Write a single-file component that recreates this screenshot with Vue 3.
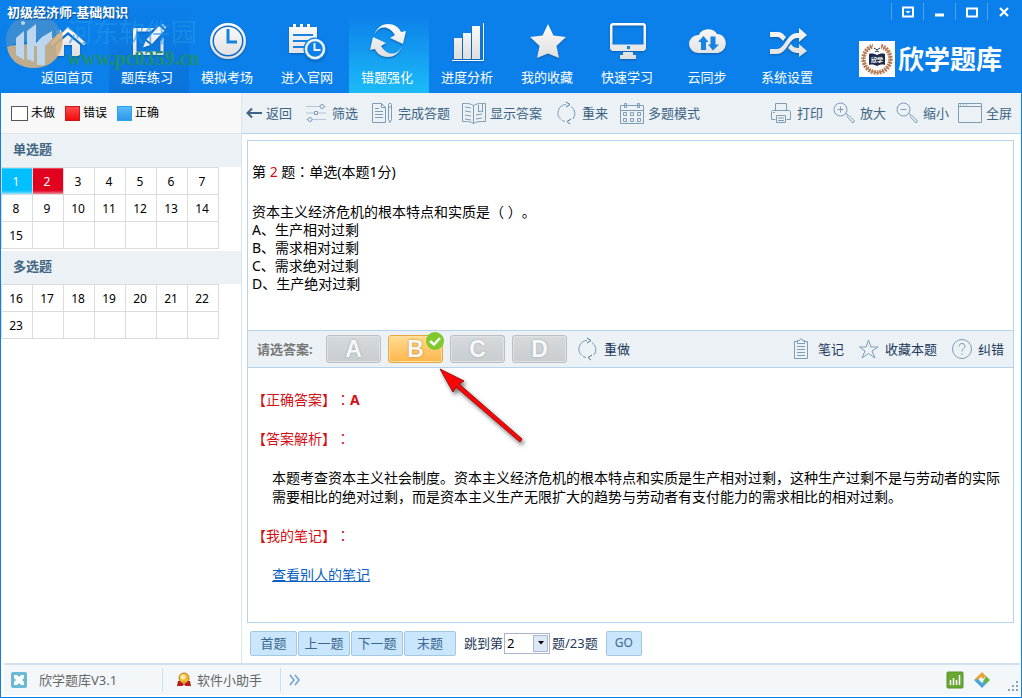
<script setup>
import { ref } from 'vue'

const nav = [
  { id: 'home', label: '返回首页' },
  { id: 'edit', label: '题库练习' },
  { id: 'clock', label: '模拟考场' },
  { id: 'site', label: '进入官网' },
  { id: 'sync', label: '错题强化' },
  { id: 'bars', label: '进度分析' },
  { id: 'star', label: '我的收藏' },
  { id: 'screen', label: '快速学习' },
  { id: 'cloud', label: '云同步' },
  { id: 'shuffle', label: '系统设置' },
]
const active = ref('sync')

const groups = [
  { title: '单选题', rows: [[1, 2, 3, 4, 5, 6, 7], [8, 9, 10, 11, 12, 13, 14], [15, '', '', '', '', '', '']] },
  { title: '多选题', rows: [[16, 17, 18, 19, 20, 21, 22], [23, '', '', '', '', '', '']] },
]
const state = { 1: 'right', 2: 'wrong' }

const toolsLeft = [
  { id: 'filter', label: '筛选' },
  { id: 'doc', label: '完成答题' },
  { id: 'book', label: '显示答案' },
  { id: 'redo', label: '重来' },
  { id: 'calendar', label: '多题模式' },
]
const toolsRight = [
  { id: 'print', label: '打印' },
  { id: 'plus', label: '放大' },
  { id: 'minus', label: '缩小' },
  { id: 'full', label: '全屏' },
]

const options = ['生产相对过剩', '需求相对过剩', '需求绝对过剩', '生产绝对过剩']
const letters = ['A', 'B', 'C', 'D']
const chosen = ref('B')
const current = ref(2)
</script>

<template>
  <div class="window">
    <header class="header">
      <nav class="nav">
        <button
          v-for="n in nav"
          :key="n.id"
          type="button"
          class="tile"
          :class="{ active: active === n.id, hover: n.id === 'edit' }"
          @click="active = n.id"
        >
          <svg class="tile-icon" viewBox="0 0 40 40" aria-hidden="true">
            <defs>
              <linearGradient :id="'g-' + n.id" gradientUnits="userSpaceOnUse" x1="0" y1="0" x2="0" y2="40">
                <stop offset="0" stop-color="#ffffff" />
                <stop offset="1" stop-color="#dcdcdc" />
              </linearGradient>
            </defs>
            <g :fill="`url(#g-${n.id})`">
              <path v-if="n.id === 'home'" d="M20 6 38 22l-2 2.500L20 11 4 24.500 2 22 8 16.500V9h5v4zM20 14l12 10v11h-8V24h-8v11H8V24z" />
              <template v-else-if="n.id === 'edit'">
                <path d="M5 7h21l-3.500 3.500H8.500v20h24V20l3-3.500V34H5z" />
                <path d="m31 5 5.500 4.500L24 23l-5.500-4.500zM17.500 20l5 4-7.500 2.500zM33 3.500c2-1.500 6 2 4.500 4.500z" />
              </template>
              <template v-else-if="n.id === 'clock'">
                <path fill-rule="evenodd" d="M20 2a18 18 0 1 0 0 36 18 18 0 0 0 0-36zm0 2.500a15.500 15.500 0 1 1 0 31 15.500 15.500 0 0 1 0-31z" />
                <circle cx="20" cy="20" r="14" />
                <path d="M20 8v13h9" fill="none" stroke="#1683e3" stroke-width="3" />
              </template>
              <template v-else-if="n.id === 'site'">
                <path d="M1 6h5v3h2V6h5v3h2V6h5v3h2V6h7v11H1zM1 16h28v16H1z" />
                <path d="M5 3h3v6H5zM12 3h3v6h-3zM19 3h3v6h-3z" />
                <path d="M5 14h20M5 20h15M5 26h12" stroke="#1683e3" stroke-width="2.200" />
                <circle cx="27" cy="28" r="11.500" fill="#0d80e9" />
                <circle cx="27" cy="28" r="9" fill="#0d80e9" stroke="#f2f2f2" stroke-width="2.500" />
                <path d="M26.500 22v7h6" fill="none" stroke="#f2f2f2" stroke-width="2" />
              </template>
              <template v-else-if="n.id === 'sync'">
                <path d="M6 14C9 6 15 3 20 3c6 0 11 3 13 8l5-1-3 13-13-6 5-3c-4-6-8-8-12-7.500C11 7 8 10 6 14z" />
                <path d="M34 25c-3 8-9 11-14 11-6 0-11-3-13-8l-5 1 3-13 13 6-5 3c4 6 8 8 12 7.500 4-.500 7-3.500 9-7.500z" />
              </template>
              <template v-else-if="n.id === 'bars'">
                <path d="M6 17h8v21H6zM15 12h8v26h-8zM24 5h8v33h-8z" />
                <path d="M4 39.500h31.500V2" fill="none" stroke="#fff" stroke-width="1" />
              </template>
              <path v-else-if="n.id === 'star'" d="m20 3 5.500 11.500L38 16l-9.500 9L31 37l-11-4.500L9 37l2.500-12L2 16l12.500-1.500z" />
              <template v-else-if="n.id === 'screen'">
                <path fill-rule="evenodd" d="M4 2h32l2 2v24l-2 2H4l-2-2V4zm.500 2.500v19h31v-19zM15 31h10v3h3v4H12v-4h3z" />
                <rect x="19" y="25" width="3" height="3" fill="#1683e3" />
              </template>
              <template v-else-if="n.id === 'cloud'">
                <path d="M10 32a9 9 0 0 1 0-18h1c2-7 15-8 18-1 11 0 12 17 1 19z" />
                <path d="m15.500 15 5 6H18v8h-5v-8h-3zM22.500 15.500h5v8H31l-6 6-5-6h2.500z" fill="#1683e3" />
              </template>
              <template v-else>
                <path d="M2 11h8c4 0 6 3 8 5l-3 4c-2-2-3-4-6-4H2zM2 28h7c8 0 10-16 20-16h2V7l8 7-8 7v-4h-2C21 17 19 33 9 33H2zM23 23c2 3 4 4 8 4v-4l8 7-8 6v-4c-6 0-8-2-11-5z" />
              </template>
            </g>
          </svg>
          <span>{{ n.label }}</span>
        </button>
      </nav>

      <div class="header-right">
        <div class="controls">
          <button type="button" aria-label="菜单">
            <svg viewBox="0 0 12 12"><path d="M1 1.500h10v9H1z" /><path d="M3.500 5h5L6 7.500z" class="solid" /></svg>
          </button>
          <button type="button" aria-label="最小化">
            <svg viewBox="0 0 12 12"><path d="M1 9h9" class="thick" /></svg>
          </button>
          <button type="button" aria-label="最大化">
            <svg viewBox="0 0 12 12"><path d="M1 2.500h10v8H1z" /></svg>
          </button>
          <button type="button" aria-label="关闭">
            <svg viewBox="0 0 12 12"><path d="m2 2 8 8M10 2l-8 8" /></svg>
          </button>
        </div>
        <div class="brand">
          <svg class="seal" viewBox="0 0 36 36" aria-hidden="true">
            <path fill="#fff" d="M0 0h36v36H0z" />
            <circle cx="18" cy="18" r="13.500" fill="none" stroke="#b87852" stroke-width="4.500" stroke-dasharray="1.800 1" />
            <circle cx="18" cy="18" r="13.500" fill="none" stroke="#b87852" stroke-width="1" />
            <path d="M14 0h8v7h-8z" fill="#fff" />
            <path d="m15 7 3 2 3-2M16 11l2-1 2 1" fill="none" stroke="#26334f" />
            <path d="M10 13c3-1 6 0 8 1 2-1 5-2 8-1v11c-3-1-6 0-8 1-2-1-5-2-8-1z" fill="#1d2a49" />
            <text x="18" y="21" text-anchor="middle" fill="#fff" font-size="6">欣学</text>
          </svg>
          <span>欣学题库</span>
        </div>
      </div>

      <div class="watermark" aria-hidden="true">
        <svg viewBox="0 0 60 60">
          <path d="M2 36A28 26 0 0 1 56 22C44 32 14 28 2 36z" fill="#3f8fd0" />
          <path d="M2 36c10-5 36 2 55-16 4 22-9 37-28 37C14 57 4 49 2 36z" fill="#d3b083" />
          <path d="M11 27l8-7v29l-8-5zM22 20l9-7v19l6-6 10-6v8l-7 7v19h-8V35h-3v16l-7-3z" fill="#cfe0ee" />
          <circle cx="18" cy="12" r="2" fill="#cfe0ee" />
        </svg>
        <span class="wm-name">河东软件园</span>
        <span class="wm-url">www.pc0359.cn</span>
      </div>
      <h1 class="title">初级经济师-基础知识</h1>
    </header>

    <div class="body">
      <aside class="sidebar">
        <div class="legend">
          <span><i class="box todo"></i>未做</span>
          <span><i class="box bad"></i>错误</span>
          <span><i class="box good"></i>正确</span>
        </div>
        <section v-for="g in groups" :key="g.title" class="group">
          <h2>{{ g.title }}</h2>
          <table>
            <tbody>
              <tr v-for="(r, i) in g.rows" :key="i">
                <td v-for="(c, j) in r" :key="j" :class="state[c]">{{ c }}</td>
              </tr>
            </tbody>
          </table>
        </section>
      </aside>

      <main class="content">
        <div class="toolbar">
          <div class="tools">
            <button type="button" class="tool">
              <svg class="back" viewBox="0 0 16 20" aria-hidden="true"><path d="M1.500 10H16M6 5.500 1.500 10 6 14.500" /></svg>返回
            </button>
            <button v-for="t in toolsLeft" :key="t.id" type="button" class="tool">
              <svg viewBox="0 0 24 24" aria-hidden="true">
                <g v-if="t.id === 'filter'">
                  <path d="M2 5.500h14M20 5.500h2M2 12h8M14 12h8M2 18.500h2M8 18.500h14" opacity=".5" />
                  <circle cx="18" cy="5.500" r="2" /><path d="M10.500 10.500h3v3h-3z" /><circle cx="6" cy="18.500" r="2" />
                </g>
                <path v-else-if="t.id === 'doc'" d="M2.500 2.500h9l4 4v15h-13zM11.500 2.500v4h4M5 7.500h4M5 10.500h8M5 13.500h8M5 16.500h8M18.500 3.500c0-1.500 3-1.500 3 0v15l-1.500 3-1.500-3zM18.500 6h3" />
                <path v-else-if="t.id === 'book'" d="M11.500 4.500c-3-2-6-2-8-2h-3v18h3c3 0 5 0 8 2 3-2 6-2 9-2h3v-18h-3c-3 0-6 0-9 2zv18M3 6l6 1M3 10l6 1M3 14l6 1M3 18l6 1M14 14l6-1M14 18l6-1M16.500 4v7l2-1 2 1V3" />
                <g v-else-if="t.id === 'redo'">
                  <path d="M7 18.500a8.500 8.500 0 0 1 5-15M17 5.500A8.500 8.500 0 0 1 19 18M11 20.500l-3-1" />
                  <path d="m12 1 4 2.500L12 6M17 18l-4 2.500 3 2.500" class="dark" />
                </g>
                <path v-else d="M.500 4.500h23v18H.500zM.500 9.500h23M4.500 2.500h2v4h-2zM17.500 2.500h2v4h-2zM3.500 11.500h3v3h-3zM10.500 11.500h3v3h-3zM17.500 11.500h3v3h-3zM3.500 17.500h3v3h-3zM10.500 17.500h3v3h-3zM17.500 17.500h3v3h-3z" />
              </svg>{{ t.label }}
            </button>
          </div>
          <div class="tools right">
            <button v-for="t in toolsRight" :key="t.id" type="button" class="tool">
              <svg viewBox="0 0 24 24" aria-hidden="true">
                <path v-if="t.id === 'print'" d="M6.500 9V2.500h11V9M6.500 18.500h-4v-8l1-1h17l1 1v8h-4M7.500 14.500h9v7h-9zM9 17h6M9 19.500h6M4 11.500h2" />
                <g v-else-if="t.id === 'plus' || t.id === 'minus'">
                  <circle cx="8.500" cy="8.500" r="6.500" /><path d="M5.500 8.500h6M14 12.500l2 1.500M15 15.500l1.500-1.500 6 6-1.500 2z" />
                  <path v-if="t.id === 'plus'" d="M8.500 5.500v6" />
                </g>
                <path v-else d="M.500 2.500h23v19H.500zM.500 5.500h23M2 4h1M5 4h1M8 4h1" />
              </svg>{{ t.label }}
            </button>
          </div>
        </div>

        <article class="panel">
          <section class="question">
            <p class="q-head">第 <b>2</b> 题<span class="mid">：</span>单选(本题1分)</p>
            <p>资本主义经济危机的根本特点和实质是（ ）。</p>
            <p v-for="(o, i) in options" :key="o">{{ letters[i] }}、{{ o }}</p>
          </section>

          <div class="answer-bar">
            <strong>请选答案:</strong>
            <div class="answers">
              <div v-for="l in letters" :key="l" class="answer">
                <button type="button" :class="{ on: chosen === l }" @click="chosen = l">{{ l }}</button>
                <template v-if="chosen === l">
                  <svg class="check" viewBox="0 0 20 20" aria-hidden="true">
                    <circle cx="10" cy="10" r="9" fill="#7fc92b" />
                    <path d="m5 10 4 3.500L15 7" fill="none" stroke="#fff" stroke-width="2.500" />
                  </svg>
                  <svg class="pointer" viewBox="0 0 96 86" aria-hidden="true">
                    <path d="m3 3 24 12-5 3 63 55-2 3-64-55-3 5z" fill="#fb0606" stroke="#a01010" stroke-width="1" />
                  </svg>
                </template>
              </div>
            </div>
            <button type="button" class="link redo">
              <svg viewBox="0 0 20 24" aria-hidden="true">
                <path d="M4 18.500a8.500 8.500 0 0 1 5-15M14 5.500A8.500 8.500 0 0 1 16 18M8 20.500l-3-1" />
                <path d="m9 1 4 2.500L9 6M14 18l-4 2.500 3 2.500" class="dark" />
              </svg>重做
            </button>
            <div class="links">
              <button type="button" class="link">
                <svg viewBox="0 0 20 24" aria-hidden="true"><path d="M2.500 4.500h3M12.500 4.500h3v17h-13v-17M5.500 6.500v-3h2c0-2 3-2 3 0h2v3zM5 9.500h8M5 12.500h8M5 15.500h8M5 18.500h8" /></svg>笔记
              </button>
              <button type="button" class="link">
                <svg viewBox="0 0 20 24" aria-hidden="true"><path d="m9.500 3 2.500 7h7l-6 4 3 7-6.500-4.500L3 21l3-7-5.500-4H7z" /></svg>收藏本题
              </button>
              <button type="button" class="link">
                <svg viewBox="0 0 20 24" aria-hidden="true"><circle cx="10" cy="12" r="9.500" /><path d="M7 9.500c0-4 6-4 6 0 0 2-3 2-3 5M10 16.500v1.500" /></svg>纠错
              </button>
            </div>
          </div>

          <section class="explain">
            <h3>【正确答案】<span class="mid">：</span><b>A</b></h3>
            <h3>【答案解析】<span class="mid">：</span></h3>
            <p>本题考查资本主义社会制度。资本主义经济危机的根本特点和实质是生产相对过剩，这种生产过剩不是与劳动者的实际需要相比的绝对过剩，而是资本主义生产无限扩大的趋势与劳动者有支付能力的需求相比的相对过剩。</p>
            <h3>【我的笔记】<span class="mid">：</span></h3>
            <p><a href="#notes">查看别人的笔记</a></p>
          </section>
        </article>

        <div class="pager">
          <button type="button" class="first">首题</button>
          <button type="button">上一题</button>
          <button type="button">下一题</button>
          <button type="button">末题</button>
          <label for="jump">跳到第</label>
          <span class="select">
            <select id="jump" v-model="current">
              <option v-for="n in 23" :key="n" :value="n">{{ n }}</option>
            </select>
            <i aria-hidden="true"><svg viewBox="0 0 6 4"><path d="M0 0h6L3 3.500z" /></svg></i>
          </span>
          <span class="total">题/23题</span>
          <button type="button" class="go">GO</button>
        </div>
      </main>
    </div>

    <footer class="footer">
      <div class="foot-item version">
        <svg viewBox="0 0 16 16" aria-hidden="true">
          <rect width="16" height="16" rx="2" fill="#6bb9d3" />
          <path d="M3 3h3l2 2 2-2h3v3l-2 2 2 2v3h-3l-2-2-2 2H3v-3l2-2-2-2z" fill="#fff" />
        </svg>欣学题库V3.1
      </div>
      <div class="foot-item helper">
        <svg viewBox="0 0 16 16" aria-hidden="true">
          <path d="M2 9h4l2 4-2 1H1zM14 9h-4l-2 4 2 1h5z" fill="#b51b16" />
          <circle cx="8" cy="6" r="5" fill="#f3b83a" stroke="#c77c17" />
          <circle cx="7" cy="5" r="2.500" fill="#fff0ae" />
        </svg>软件小助手
      </div>
      <button type="button" class="more" aria-label="更多">
        <svg viewBox="0 0 12 12"><path d="m1 1 4 5-4 5M6 1l4 5-4 5" fill="none" stroke="#6f9fca" stroke-width="1.500" /></svg>
      </button>
      <div class="foot-right">
        <svg viewBox="0 0 18 18" aria-hidden="true">
          <rect x="1" y="1" width="16" height="16" rx="1" fill="#69a832" stroke="#579126" />
          <path d="M4.500 14V9M7.500 14V7M10.500 14V9M13.500 14V4" stroke="#fff" stroke-width="1.500" />
        </svg>
        <svg viewBox="0 0 18 18" aria-hidden="true">
          <path d="m9 1 4 4-3 3-2-2-3 3-4 0z" fill="#e8a33b" />
          <path d="m1 9 4-1 4 4 2-2 2 3-4 4z" fill="#4ba5d9" />
          <path d="m13 5 4 4-4 4-3-3 1-1z" fill="#65b546" />
        </svg>
        <svg class="grip" viewBox="0 0 12 12" aria-hidden="true"><path d="M8 1h2v2H8zM8 5h2v2H8zM8 9h2v2H8zM4 5h2v2H4zM4 9h2v2H4zM0 9h2v2H0z" fill="#8ba3b8" /></svg>
      </div>
    </footer>
  </div>
</template>

<style>
body {
  margin: 0;
  background: #fff;
}
</style>

<style scoped>
.window {
  box-sizing: border-box;
  min-height: 100vh;
  display: flex;
  flex-direction: column;
  border: 1px solid #0c80ea;
  border-top: 0;
  font: 13px/20px "Noto Sans", "Noto Sans CJK SC", sans-serif;
  color: #000;
  text-spacing-trim: space-all;
}
h1, h2, h3, p { margin: 0; font: inherit; }
button {
  font: inherit;
  color: inherit;
  padding: 0;
  border: 0;
  background: none;
  cursor: pointer;
  white-space: nowrap;
}
svg { display: block; flex: none; }

.header {
  position: relative;
  display: flex;
  justify-content: space-between;
  height: 93px;
  background: #0c80ea;
  color: #fff;
}
.title {
  position: absolute;
  left: 6px;
  top: 5px;
  font-weight: 700;
  line-height: 15px;
  text-shadow: 1px 1px 1px #0a4f96;
}
.nav { display: flex; padding-left: 28px; }
.tile {
  display: flex;
  flex-direction: column;
  align-items: center;
  gap: 6px;
  box-sizing: border-box;
  width: 80px;
  padding: 21px 2px 0 0;
}
.tile span { margin-right: 2px; }
.tile-icon { width: 40px; height: 40px; filter: drop-shadow(0 1px 1px #0a5cae); }
.tile.hover { background: linear-gradient(#0c80ea, #0a73da); }
.tile.active { background: linear-gradient(#0c80ea 16%, #1cbbf8); }
.header-right { display: flex; flex-direction: column; align-items: flex-end; }
.controls { display: flex; padding: 3px 2px 0 0; }
.controls button {
  display: grid;
  place-items: center;
  width: 32px;
  height: 17px;
  border-left: 1px solid #4ba2f0;
}
.controls svg { width: 12px; height: 12px; fill: none; stroke: #fff; stroke-width: 2; }
.controls .solid { fill: #fff; stroke: none; }
.controls .thick { stroke-width: 3; }
.brand {
  display: flex;
  align-items: center;
  gap: 3px;
  padding: 21px 19px 0 0;
  font-size: 26px;
  font-weight: 700;
  line-height: 36px;
}
.seal { width: 36px; height: 36px; }
.watermark {
  position: absolute;
  left: 4px;
  top: 11px;
  width: 200px;
  height: 60px;
  pointer-events: none;
}
.watermark svg { width: 60px; height: 60px; opacity: 0.9; }
.wm-name, .wm-url { position: absolute; left: 62px; white-space: nowrap; }
.wm-name {
  top: 9px;
  font-family: "Noto Sans CJK SC", sans-serif;
  font-size: 26px;
  line-height: 22px;
  color: #1f95ea;
  opacity: 0.6;
}
.wm-url {
  top: 37px;
  font: 700 20px/20px "Liberation Serif", serif;
  color: #1b8f76;
}

.body { flex: 1; display: flex; }
.sidebar { flex: none; width: 240px; border-right: 1px solid #dde5ec; }
.legend {
  display: flex;
  align-items: center;
  gap: 10px;
  height: 40px;
  padding-left: 10px;
  background: #f8f8f8;
  border-bottom: 1px solid #e3e7ea;
  font-size: 12px;
}
.legend span { display: flex; align-items: center; gap: 3px; }
.box { box-sizing: border-box; width: 15px; height: 15px; border: 1px solid; }
.todo { width: 17px; border-color: #555; background: #fff; }
.bad { border-color: #c81818; background: linear-gradient(#ff4a4a, #f30d0d); }
.good { border-color: #23a5f0; background: linear-gradient(#5bb9f7, #2d97ec); }
.group { margin-bottom: 2px; }
.group h2 {
  padding: 5px 12px 8px;
  background: #ebf1f5;
  color: #3f6583;
  font-weight: 700;
}
table { border-collapse: collapse; table-layout: fixed; width: 218px; }
td {
  box-sizing: border-box;
  height: 27px;
  padding: 2px 2px 0 0;
  border: 1px solid #d9dbdd;
  text-align: center;
  font-size: 12px;
  line-height: 20px;
}
td.right { color: #fff; background: linear-gradient(#00bfff 85%, #a8e8ff); }
td.wrong { color: #fff; background: linear-gradient(#e2001f 85%, #f3a3ae); }

.content { flex: 1; min-width: 0; display: flex; flex-direction: column; }
.toolbar {
  display: flex;
  justify-content: space-between;
  height: 40px;
  padding: 0 9px 0 4px;
  background: #ebf1f5;
  border-bottom: 1px solid #b5d3ea;
  color: #3d6484;
}
.tools { display: flex; gap: 12px; }
.tools.right { gap: 9px; }
.tool { display: flex; align-items: center; gap: 4px; }
.tool svg, .link svg {
  height: 24px;
  fill: none;
  stroke: #7e9cb3;
  stroke-width: 1;
}
.tool svg { width: 24px; }
.tool .back { width: 16px; height: 20px; stroke: #3d6484; stroke-width: 2; }
.tool .dark, .link .dark { stroke: #4f7692; }
.panel {
  flex: 1;
  display: flex;
  flex-direction: column;
  margin: 6px 7px 0 5px;
  border: 1px solid #b5d3ea;
  font-size: 14px;
}
.question { padding: 21px 4px 37px; line-height: 18px; }
.q-head { margin-bottom: 22px; }
.q-head b { color: #d40f14; font-weight: 400; }
.mid { font-family: "Noto Sans CJK TC", sans-serif; }
.answer-bar {
  display: flex;
  align-items: center;
  height: 36px;
  padding: 0 9px;
  background: #ebf1f5;
  border: solid #b5d3ea;
  border-width: 1px 0;
  font-size: 13px;
  color: #1f3a5c;
}
.answer-bar strong { flex: none; width: 69px; color: #777; }
.answers { display: flex; gap: 7px; }
.answer { position: relative; }
.answer button {
  display: block;
  box-sizing: border-box;
  width: 55px;
  height: 28px;
  border: 1px solid #b9bfc3;
  border-radius: 3px;
  background: linear-gradient(#d6dadd, #c8cdd0);
  box-shadow: inset 0 0 0 1px #dfe3e5;
  color: #f6f8f9;
  font: 700 23px/27px "Liberation Sans", sans-serif;
  text-shadow: 0 0 2px #8f979c;
}
.answer button.on {
  border-color: #e9a83d;
  background: linear-gradient(#ffdc91, #ffb64d);
  box-shadow: inset 0 0 0 1px #ffe0a2;
  text-shadow: 0 0 2px #b96e00;
}
.check { position: absolute; right: -2px; top: -4px; width: 20px; height: 20px; }
.pointer {
  position: absolute;
  left: 49px;
  top: 31px;
  width: 96px;
  height: 86px;
  pointer-events: none;
  filter: drop-shadow(2px 3px 2px #777);
}
.link { display: flex; align-items: center; gap: 6px; }
.link svg { width: 20px; }
.redo { margin-left: 11px; }
.links { display: flex; gap: 15px; margin-left: auto; }
.explain { padding: 22px 4px 0; line-height: 19px; }
.explain h3, .explain p { margin-bottom: 20px; }
.explain h3 { color: #d40f14; }
.explain h3 b { font-weight: 700; }
.explain p { padding-left: 20px; }
.explain a { color: #0a5fc4; }

.pager {
  display: flex;
  align-items: center;
  height: 40px;
  padding-left: 8px;
  gap: 1px;
  color: #1f3a5c;
}
.pager button {
  box-sizing: border-box;
  width: 52px;
  height: 25px;
  border: 1px solid #a3c8e2;
  border-radius: 2px;
  background: #c9e6fd;
  color: #3d6890;
}
.pager .first { width: 47px; }
.pager label { margin-left: 7px; }
.select { position: relative; width: 46px; height: 21px; }
select {
  appearance: none;
  box-sizing: border-box;
  width: 100%;
  height: 100%;
  padding: 0 2px;
  border: 1px solid #a9b5cb;
  border-radius: 0;
  background: #fff;
  color: #000;
  font: inherit;
  line-height: 18px;
}
.select i {
  position: absolute;
  right: 2px;
  top: 2px;
  bottom: 2px;
  width: 13px;
  display: grid;
  place-items: center;
  border: 1px solid #adb9d2;
  background: #dde8f7;
  pointer-events: none;
}
.select i svg { width: 6px; height: 4px; }
.total { margin-left: 1px; }
.pager .go { width: 36px; margin-left: 7px; font-size: 12px; }

.footer {
  display: flex;
  align-items: center;
  height: 30px;
  margin: 0 1px 2px 3px;
  border-top: 2px solid #d1e1ee;
  background: #f3f7fa;
  color: #666;
}
.foot-item {
  display: flex;
  align-items: center;
  box-sizing: border-box;
  height: 24px;
  border-right: 1px solid #cfe0ee;
}
.foot-item svg { width: 16px; height: 16px; }
.version { width: 159px; gap: 12px; padding-left: 7px; }
.helper { width: 118px; gap: 5px; padding-left: 13px; }
.more { margin-left: 8px; }
.more svg { width: 12px; height: 12px; }
.foot-right { display: flex; align-items: center; gap: 9px; margin-left: auto; }
.foot-right svg { width: 18px; height: 18px; }
.foot-right .grip { width: 12px; height: 12px; margin: 12px 0 0 8px; }
</style>
